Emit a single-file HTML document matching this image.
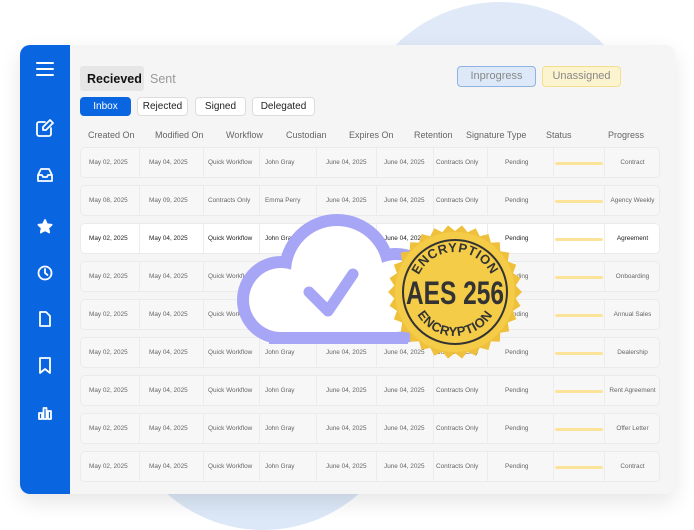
<!DOCTYPE html>
<html><head><meta charset="utf-8"><style>
*{margin:0;padding:0;box-sizing:border-box}
body{width:694px;height:526px;overflow:hidden;background:#fff;font-family:"Liberation Sans",Arial,sans-serif;position:relative}
.abs{position:absolute}
.circ{position:absolute;border-radius:50%;background:#dfe9f7}
.card{position:absolute;left:20px;top:45px;width:655px;height:449px;background:#f5f5f5;border-radius:10px;box-shadow:0 8px 22px rgba(0,0,0,.10);overflow:hidden}
.side{position:absolute;left:0;top:0;width:50px;height:100%;background:#0a66e0}
.tab{position:absolute;font-size:12.5px}
.btn{position:absolute;top:52px;height:19px;border:1px solid #ddd;background:#fff;border-radius:4px;font-size:10px;line-height:17px;text-align:center;color:#222}
.hd{position:absolute;top:85px;font-size:9px;color:#666}
.row{position:absolute;left:60px;width:580px;height:31px;border:1px solid #ebebeb;border-radius:5px;background:#f7f7f7}
.row span{position:absolute;top:0;line-height:29px;font-size:6.4px;color:#666;white-space:nowrap}
.row i{position:absolute;top:0;bottom:0;width:1px;background:#ececec}
.row.w{background:#fff}
.row.w span{color:#222}
.bar{position:absolute;top:14px;left:474px;width:48px;height:2.5px;background:#fbe49a;border-radius:2px}
</style></head><body>
<div class="circ" style="left:352px;top:2px;width:296px;height:296px"></div>
<div class="circ" style="left:118px;top:240px;width:290px;height:290px;background:#dce8f7"></div>
<div class="card">
<div class="side">
<svg width="50" height="449" fill="none" stroke="#fff" stroke-width="1.8" stroke-linecap="round" stroke-linejoin="round">
<path d="M17 18h16M17 24h16M17 30h16" stroke-width="2"/>
<path d="M31 83v6a2 2 0 0 1-2 2H19a2 2 0 0 1-2-2V79a2 2 0 0 1 2-2h6"/><path d="M30 75l3 3-7 7h-3v-3z"/>
<path d="M18 130l3-6h8l3 6v6H18zM18 130h4l1 2h4l1-2h4"/>
<path d="M25 175l2 4.3 4.6.5-3.4 3.1 1 4.6-4.2-2.4-4.2 2.4 1-4.6-3.4-3.1 4.6-.5z" fill="#fff"/>
<circle cx="25" cy="228" r="6.5"/><path d="M25 224v4l2.5 2"/>
<path d="M20 267h6l4 4v10h-10z"/>
<path d="M20 313h10v15l-5-4-5 4z"/>
<path d="M19 374v-6h3v6zM23.5 374v-11h3v11zM28 374v-8h3v8z"/>
</svg>
</div>
<div class="abs" style="left:60px;top:21px;width:64px;height:25px;background:#e6e6e6;border-radius:3px"></div>
<div class="tab" style="left:67px;top:27px;font-weight:bold;color:#111">Recieved</div>
<div class="tab" style="left:130px;top:27px;color:#999">Sent</div>
<div class="btn" style="left:60px;width:51px;background:#0a66e0;border-color:#0a66e0;color:#fff">Inbox</div>
<div class="btn" style="left:117px;width:51px">Rejected</div>
<div class="btn" style="left:175px;width:51px">Signed</div>
<div class="btn" style="left:232px;width:63px">Delegated</div>
<div class="abs" style="left:437px;top:21px;width:79px;height:21px;background:#dde9f8;border:1px solid #8fb4e4;border-radius:4px;font-size:11px;line-height:19px;text-align:center;color:#888">Inprogress</div>
<div class="abs" style="left:522px;top:21px;width:79px;height:21px;background:#fcf3cf;border:1px solid #f3df8e;border-radius:4px;font-size:11px;line-height:19px;text-align:center;color:#888">Unassigned</div>
<div class="hd" style="left:68px">Created On</div>
<div class="hd" style="left:135px">Modified On</div>
<div class="hd" style="left:206px">Workflow</div>
<div class="hd" style="left:266px">Custodian</div>
<div class="hd" style="left:329px">Expires On</div>
<div class="hd" style="left:394px">Retention</div>
<div class="hd" style="left:446px">Signature Type</div>
<div class="hd" style="left:526px">Status</div>
<div class="hd" style="left:588px">Progress</div>
<div id="rows"></div>
</div>
<svg class="abs" style="left:0;top:0" width="694" height="526">
<g fill="#a6a5f6" stroke="#a6a5f6" stroke-width="24">
<circle cx="281" cy="300" r="32"/><circle cx="337" cy="272" r="46"/><circle cx="396" cy="296" r="36"/><rect x="281" y="292" width="115" height="40"/>
</g>
<g fill="#fff">
<circle cx="281" cy="300" r="32"/><circle cx="337" cy="272" r="46"/><circle cx="396" cy="296" r="36"/><rect x="281" y="292" width="115" height="40"/>
</g>
<path d="M309 292l19 19 25-37" fill="none" stroke="#a6a5f6" stroke-width="11" stroke-linecap="round" stroke-linejoin="round"/>
<polygon id="seal" fill="#efc03c"/>
<circle cx="455" cy="292" r="60" fill="#f4cc48"/>
<circle cx="455" cy="292" r="52" fill="none" stroke="#333" stroke-width="2"/>
<circle cx="455" cy="292" r="49" fill="#f4cc48"/>
<defs>
<path id="tp" d="M415 292a40 40 0 0 1 80 0"/>
<path id="bp" d="M411 292a44 44 0 0 0 88 0"/>
</defs>
<text font-family="Liberation Sans,sans-serif" font-weight="bold" font-size="13" fill="#333" letter-spacing="0.6"><textPath href="#tp" startOffset="50%" text-anchor="middle">ENCRYPTION</textPath></text>
<text font-family="Liberation Sans,sans-serif" font-weight="bold" font-size="13" fill="#333" letter-spacing="0.6"><textPath href="#bp" startOffset="50%" text-anchor="middle">ENCRYPTION</textPath></text>
<text x="455" y="304" text-anchor="middle" font-family="Liberation Sans Narrow,Liberation Sans,sans-serif" font-weight="bold" font-size="32" fill="#333" textLength="98" lengthAdjust="spacingAndGlyphs">AES 256</text>
</svg>
<script>
(function(){
var pts=[],n=30,cx=455,cy=292;
for(var i=0;i<n*2;i++){var r=i%2?61:67,a=Math.PI*i/n;pts.push((cx+r*Math.cos(a)).toFixed(1)+','+(cy+r*Math.sin(a)).toFixed(1));}
document.getElementById('seal').setAttribute('points',pts.join(' '));
var prog=['Contract','Agency Weekly','Agreement','Onboarding','Annual Sales','Dealership','Rent Agreement','Offer Letter','Contract'];
var h='';
for(var k=0;k<9;k++){
var ty=102+k*38,r2=k==1;
var d=[['May 0'+(r2?'8':'2')+', 2025',8],['May 0'+(r2?'9':'4')+', 2025',68],[r2?'Contracts Only':'Quick Workflow',127],[r2?'Emma Perry':'John Gray',184],['June 04, 2025',245],['June 04, 2025',303],['Contracts Only',355],['Pending',424]];
h+='<div class="row'+(k==2?' w':'')+'" style="top:'+ty+'px">';
[58,122,178,235,295,352,406,472,523].forEach(function(x){h+='<i style="left:'+x+'px"></i>'});
d.forEach(function(c){h+='<span style="left:'+c[1]+'px">'+c[0]+'</span>'});
h+='<div class="bar"></div><span style="left:523px;width:57px;text-align:center">'+prog[k]+'</span></div>';
}
document.getElementById('rows').innerHTML=h;
})();
</script>
</body></html>
